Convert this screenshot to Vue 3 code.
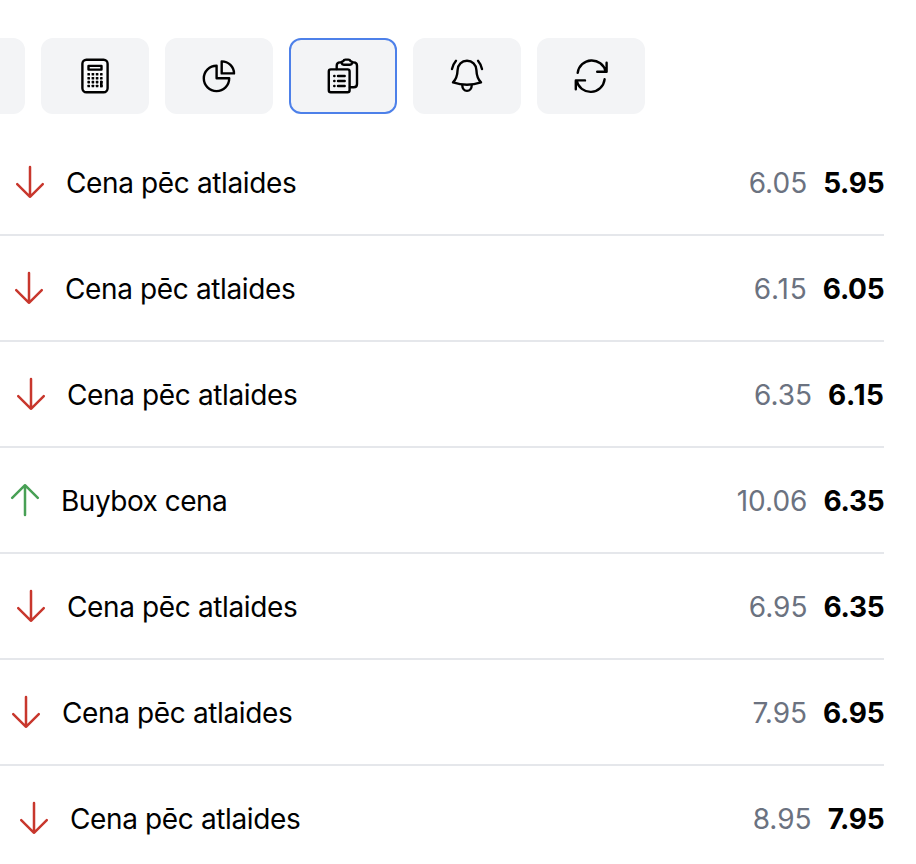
<script setup>
const rows = [
  { label: 'Cena pēc atlaides', old: '6.05', now: '5.95', inset: 14 },
  { label: 'Cena pēc atlaides', old: '6.15', now: '6.05', inset: 13 },
  { label: 'Cena pēc atlaides', old: '6.35', now: '6.15', inset: 15 },
  { label: 'Buybox cena', old: '10.06', now: '6.35', inset: 9, up: true },
  { label: 'Cena pēc atlaides', old: '6.95', now: '6.35', inset: 15 },
  { label: 'Cena pēc atlaides', old: '7.95', now: '6.95', inset: 10 },
  { label: 'Cena pēc atlaides', old: '8.95', now: '7.95', inset: 18 },
]
const keys = [0, 1, 2, 3].flatMap((r) =>
  [0, 1, 2, 3].map((c) => ({ x: 16.4 + c * 4.2, y: 21 + r * 3.9 }))
)
const loose = (value) => value.includes('.1')
</script>

<template>
  <main class="panel">
    <nav class="toolbar">
      <button class="tab" aria-label="Back"></button>
      <button class="tab" aria-label="Calculator">
        <svg class="icon" viewBox="0 0 48 48">
          <rect class="face" x="11.4" y="7.8" width="25.2" height="32.4" rx="4" />
          <rect x="17.5" y="13.9" width="13" height="3.7" />
          <g class="solid">
            <rect v-for="(k, i) in keys" :key="i" :x="k.x" :y="k.y" width="2.6" height="2.6" rx="0.6" />
            <rect x="29" y="28.8" width="2.6" height="6.5" rx="0.6" />
          </g>
        </svg>
      </button>
      <button class="tab" aria-label="Statistics">
        <svg class="icon" viewBox="0 0 48 48">
          <path d="M21.6 13.7V26.3H34.2A12.7 12.7 0 1 1 21.6 13.7Z" />
          <path d="M26.7 9.4V21.4H39A12.3 12 0 0 0 26.7 9.4Z" />
        </svg>
      </button>
      <button class="tab active" aria-label="History">
        <svg class="icon" viewBox="0 0 48 48">
          <rect x="9.8" y="17.4" width="20.8" height="22.8" rx="2" />
          <path d="M17.7 17V13.7Q17.7 10.4 21 10.4H22.5M33.5 10.4H34.7Q38 10.4 38 13.7V32Q38 35.3 34.7 35.3H31" />
          <path d="M24.3 9.2Q24.8 7.6 26.5 7.6H29.3Q31 7.6 31.5 9.2Q33.4 9.6 33.2 11Q32.8 12.7 31 12.7H24.8Q23 12.7 22.6 11Q22.4 9.6 24.3 9.2Z" />
          <path d="M19 24H25.7M19 29H25.7M19 34H25.7M15.2 24H15.5M15.2 29H15.5M15.2 34H15.5" />
        </svg>
      </button>
      <button class="tab" aria-label="Notifications">
        <svg class="icon" viewBox="0 0 48 48">
          <path d="M24 8.8C18.8 8.8 14.8 12.5 14.6 18C14.4 24 13.4 27 10 30.4Q24 35.2 38 30.4C34.6 27 33.6 24 33.4 18C33.2 12.5 29.2 8.8 24 8.8Z" />
          <path d="M19.3 33.3C19.3 36.6 21.3 38.9 24 38.9S28.7 36.6 28.7 33.3" />
          <path d="M13 8.8Q10.2 12 9 17M35 8.8Q37.8 12 39 17" />
        </svg>
      </button>
      <button class="tab" aria-label="Refresh">
        <svg class="icon" viewBox="0 0 48 48">
          <path d="M10.7 20.8A14.2 14.2 0 0 1 38.6 19.4M39.6 10.8V19.7H30.2" />
          <path d="M37.6 27.3A14.2 14.2 0 0 1 9.6 28.6M8.8 37.3V28.4H18" />
        </svg>
      </button>
    </nav>

    <ul class="list">
      <li v-for="(row, i) in rows" :key="i" class="row" :style="{ paddingLeft: row.inset + 'px' }">
        <svg class="arrow" :class="{ up: row.up }" viewBox="0 0 32 36">
          <path v-if="row.up" d="M16 33V3.2M3.2 15.8L16 3.2L28.8 15.8" />
          <path v-else d="M16 3V32.8M3.2 20.2L16 32.8L28.8 20.2" />
        </svg>
        <span class="label" :class="{ tight: row.up }">{{ row.label }}</span>
        <span class="old" :class="{ loose: loose(row.old) }">{{ row.old }}</span>
        <span class="now" :class="{ loose: loose(row.now) }">{{ row.now }}</span>
      </li>
    </ul>
  </main>
</template>

<style>
body {
  background: #fff;
  overflow: hidden;
}
</style>

<style scoped>
.panel {
  width: 916px;
  height: 864px;
  overflow: hidden;
  padding-top: 38px;
  box-sizing: border-box;
  font-family: Inter, "Liberation Sans", sans-serif;
  color: #000;
}
.toolbar {
  display: flex;
  gap: 16px;
  margin-left: -83px;
}
.tab {
  display: flex;
  align-items: center;
  justify-content: center;
  box-sizing: border-box;
  width: 108px;
  height: 76px;
  padding: 0;
  border: 2px solid #f3f4f6;
  border-radius: 12px;
  background: #f3f4f6;
}
.tab.active {
  border-color: #4d80e9;
}
.icon {
  width: 48px;
  height: 48px;
  flex: none;
  fill: none;
  stroke: #000;
  stroke-width: 2.4;
  stroke-linecap: round;
  stroke-linejoin: round;
}
.face {
  fill: #fafbfc;
}
.solid {
  fill: #000;
  stroke: none;
}
.list {
  list-style: none;
  margin: 16px 32px 0 0;
  padding: 0;
}
.row {
  display: flex;
  align-items: center;
  box-sizing: border-box;
  height: 106px;
  border-bottom: 2px solid #e5e7eb;
  font-size: 28px;
  line-height: 40px;
  white-space: nowrap;
}
.arrow {
  width: 32px;
  height: 36px;
  fill: none;
  stroke: #c8372d;
  stroke-width: 2.5;
  stroke-linecap: round;
  stroke-linejoin: round;
}
.arrow.up {
  stroke: #48a055;
}
.label {
  flex: 1;
  margin-left: 20px;
  padding-top: 2px;
  letter-spacing: -0.37px;
}
.label.tight {
  letter-spacing: -0.5px;
}
.old {
  color: #6b7280;
  padding-top: 2px;
}
.now {
  margin-left: 16px;
  margin-right: -0.3px;
  padding-top: 2px;
  font-weight: 650;
  letter-spacing: -0.3px;
}
.old.loose {
  letter-spacing: 0.9px;
  margin-right: -0.9px;
}
.now.loose {
  letter-spacing: 0.6px;
  margin-right: -0.6px;
}
</style>
